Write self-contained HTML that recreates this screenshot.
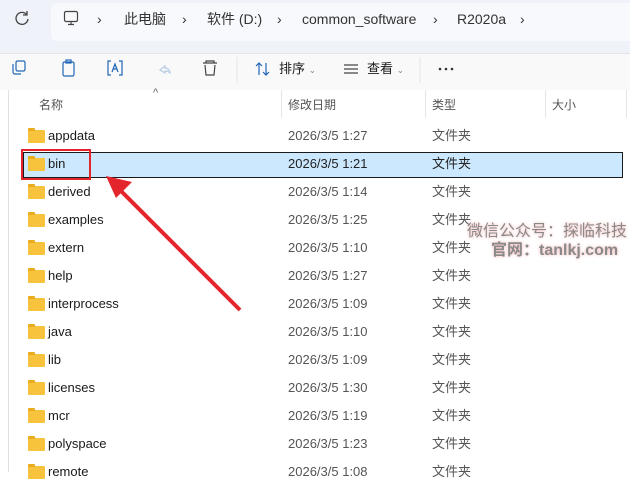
<!DOCTYPE html>
<html><head><meta charset="utf-8"><style>
*{margin:0;padding:0;box-sizing:border-box}
body{width:630px;height:472px;overflow:hidden;background:#fff;font-family:"Liberation Sans","Noto Sans CJK SC",sans-serif;position:relative;color:#1a1a1a;line-height:16px}
.top{position:absolute;left:0;top:0;width:630px;height:53px;background:#eff3f9}
.addr{position:absolute;left:51px;top:3px;width:590px;height:38px;background:#f8f9fc;border-radius:5px}
.t{position:absolute;font-size:13px;white-space:nowrap;line-height:16px}
.gt{color:#333;font-size:14px}
.tool{position:absolute;left:0;top:53px;width:630px;height:55px;background:#f9f9f9;border-top:1px solid #e5e5e5}
.hdr{position:absolute;top:90px;left:0;width:630px;height:28px;background:#fff;font-size:12px;color:#555}
.vd{position:absolute;top:0;width:1px;height:28px;background:#e5e5e5}
.row{position:absolute;left:0;width:630px;height:28px;font-size:13px;line-height:16px}
.fold{position:absolute;left:28px;top:8px;width:17px;height:13px;background:#f8c33c;border-radius:1px}
.fold:before{content:"";position:absolute;left:0;top:-2px;width:7px;height:3px;background:#e9ac1e;border-radius:1px 1px 0 0}
.n{position:absolute;left:48px;top:6px}
.d{position:absolute;left:288px;top:6px;color:#555}
.ty{position:absolute;left:432px;top:6px;color:#555;line-height:16px;height:16px}
</style></head><body>
<div class="top"></div>
<div class="addr"></div>
<svg style="position:absolute;left:14px;top:10px" width="16" height="16" viewBox="0 0 16 16"><path d="M13 5A6 6 0 1 0 14 9" fill="none" stroke="#444" stroke-width="1.3"/><path d="M13 1v4h-4" fill="none" stroke="#444" stroke-width="1.3"/></svg>
<svg style="position:absolute;left:63px;top:10px" width="16" height="16" viewBox="0 0 16 16"><rect x="1.5" y="1.5" width="13" height="10" rx="1.5" fill="none" stroke="#444" stroke-width="1.2"/><path d="M5 14.5h6M8 11.5v3" stroke="#444" stroke-width="1.2"/></svg>
<div class="t gt" style="left:97px;top:11px">›</div>
<div class="t gt" style="left:124px;top:11px">此电脑</div>
<div class="t gt" style="left:182px;top:11px">›</div>
<div class="t gt" style="left:207px;top:11px">软件 (D:)</div>
<div class="t gt" style="left:277px;top:11px">›</div>
<div class="t gt" style="left:302px;top:11px">common_software</div>
<div class="t gt" style="left:433px;top:11px">›</div>
<div class="t gt" style="left:457px;top:11px">R2020a</div>
<div class="t gt" style="left:520px;top:11px">›</div>
<div class="tool"></div>
<svg style="position:absolute;left:0;top:55px" width="630" height="30" viewBox="0 0 630 30">
<g fill="none" stroke="#2167b8" stroke-width="1.2">
<rect x="16" y="6" width="9" height="10" rx="1.5"/><path d="M13 9v8a2 2 0 0 0 2 2h6"/>
<rect x="63" y="7" width="11" height="14" rx="1.5"/><rect x="66" y="5" width="5" height="3"/>
<path d="M111 6h-3v14h3M119 6h3v14h-3M112 17l3-8 3 8M113 14h4"/>
<path d="M217 8h-14M206 8v-2h8v2M205 10l1 10h8l1-10" stroke="#444"/>
</g>
<path d="M160 15l5-4v2c3 0 5 2 5 5-2-2-3-2-5-2v2z" fill="none" stroke="#b8cce4" stroke-width="1.2"/>
<line x1="237" y1="2" x2="237" y2="28" stroke="#e5e5e5"/>
<path d="M259 8v12M256 11l3-3 3 3M266 8v12M263 17l3 3 3-3" fill="none" stroke="#2167b8" stroke-width="1.2"/>
<path d="M344 10h14M344 14h14M344 18h14" stroke="#444" stroke-width="1.2"/>
<line x1="420" y1="2" x2="420" y2="28" stroke="#e5e5e5"/>
<g fill="#333"><circle cx="440" cy="14" r="1.3"/><circle cx="446" cy="14" r="1.3"/><circle cx="452" cy="14" r="1.3"/></g>
</svg>
<div class="t" style="left:279px;top:61px;font-size:13px">排序 <span style="font-size:9px;color:#888">⌄</span></div>
<div class="t" style="left:367px;top:61px;font-size:13px">查看 <span style="font-size:9px;color:#888">⌄</span></div>
<div class="hdr">
<div style="position:absolute;left:8px;top:0;width:1px;height:382px;background:#e0e0e0"></div>
<div class="t" style="left:39px;top:7px;font-size:12px;color:#555">名称</div>
<div class="t" style="left:153px;top:-5px;font-size:11px;color:#666">^</div>
<div class="vd" style="left:281px"></div>
<div class="t" style="left:288px;top:7px;font-size:12px;color:#555">修改日期</div>
<div class="vd" style="left:425px"></div>
<div class="t" style="left:432px;top:7px;font-size:12px;color:#555">类型</div>
<div class="vd" style="left:545px"></div>
<div class="t" style="left:552px;top:7px;font-size:12px;color:#555">大小</div>
<div class="vd" style="left:626px"></div>
</div>
<div style="position:absolute;left:23px;top:152px;width:600px;height:26px;background:#cce8ff;border:1px solid #1a1a1a"></div>
<div class="row" style="top:122px"><div class="fold"></div><div class="n">appdata</div><div class="d">2026/3/5 1:27</div><div class="ty">文件夹</div></div>
<div class="row" style="top:150px"><div class="fold"></div><div class="n">bin</div><div class="d" style="color:#222">2026/3/5 1:21</div><div class="ty" style="color:#222">文件夹</div></div>
<div class="row" style="top:178px"><div class="fold"></div><div class="n">derived</div><div class="d">2026/3/5 1:14</div><div class="ty">文件夹</div></div>
<div class="row" style="top:206px"><div class="fold"></div><div class="n">examples</div><div class="d">2026/3/5 1:25</div><div class="ty">文件夹</div></div>
<div class="row" style="top:234px"><div class="fold"></div><div class="n">extern</div><div class="d">2026/3/5 1:10</div><div class="ty">文件夹</div></div>
<div class="row" style="top:262px"><div class="fold"></div><div class="n">help</div><div class="d">2026/3/5 1:27</div><div class="ty">文件夹</div></div>
<div class="row" style="top:290px"><div class="fold"></div><div class="n">interprocess</div><div class="d">2026/3/5 1:09</div><div class="ty">文件夹</div></div>
<div class="row" style="top:318px"><div class="fold"></div><div class="n">java</div><div class="d">2026/3/5 1:10</div><div class="ty">文件夹</div></div>
<div class="row" style="top:346px"><div class="fold"></div><div class="n">lib</div><div class="d">2026/3/5 1:09</div><div class="ty">文件夹</div></div>
<div class="row" style="top:374px"><div class="fold"></div><div class="n">licenses</div><div class="d">2026/3/5 1:30</div><div class="ty">文件夹</div></div>
<div class="row" style="top:402px"><div class="fold"></div><div class="n">mcr</div><div class="d">2026/3/5 1:19</div><div class="ty">文件夹</div></div>
<div class="row" style="top:430px"><div class="fold"></div><div class="n">polyspace</div><div class="d">2026/3/5 1:23</div><div class="ty">文件夹</div></div>
<div class="row" style="top:458px"><div class="fold"></div><div class="n">remote</div><div class="d">2026/3/5 1:08</div><div class="ty">文件夹</div></div>
<div class="t" style="left:467px;top:222px;font-size:16px;line-height:20px;color:#8a8a8a;text-shadow:0 0 3px #f6b0b0">微信公众号：探临科技</div>
<div class="t" style="left:491px;top:241px;font-size:16px;line-height:20px;color:#8a8a8a;font-weight:bold;text-shadow:0 0 3px #f6b0b0">官网：tanlkj.com</div>
<div style="position:absolute;left:21px;top:149px;width:70px;height:31px;border:2px solid #e4262c"></div>
<svg style="position:absolute;left:0;top:0" width="630" height="472"><line x1="240" y1="310" x2="118" y2="188" stroke="#e4262c" stroke-width="4"/><path d="M106 176l26 6-16 16z" fill="#e4262c"/></svg>
</body></html>
